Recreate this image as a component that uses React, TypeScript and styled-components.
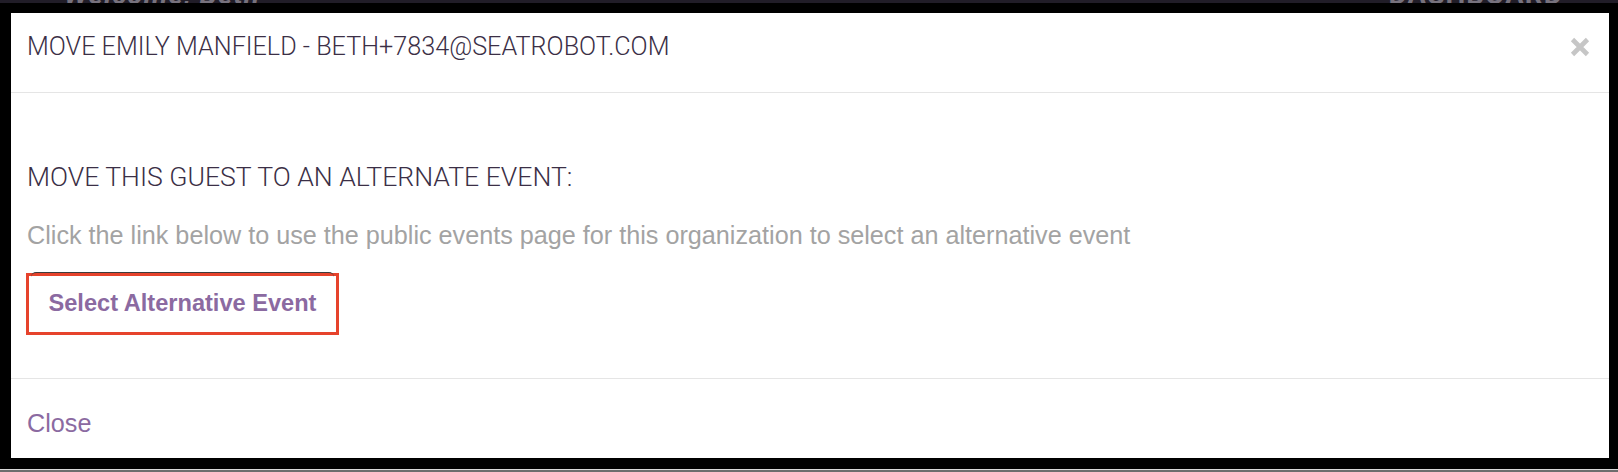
import React from "react";
import styled, { createGlobalStyle } from "styled-components";

const GlobalStyle = createGlobalStyle`
  html, body {
    margin: 0;
    padding: 0;
    background: #000;
  }
  * {
    box-sizing: border-box;
  }
`;

const Screen = styled.div`
  width: 1618px;
  height: 472px;
  display: flex;
  flex-direction: column;
  overflow: hidden;
  background: #1f1b25;
`;

const TopStrip = styled.div`
  height: 3px;
  overflow: hidden;
  display: flex;
  align-items: flex-end;
  justify-content: space-between;
  padding: 0 55px 0 64px;
  background: #211d28;
`;

const FadedText = styled.span<{ $italic?: boolean }>`
  font-family: "Roboto", "Liberation Sans", sans-serif;
  font-size: 28px;
  line-height: 28px;
  font-weight: 700;
  font-style: ${(p) => (p.$italic ? "italic" : "normal")};
  color: #77727d;
  margin-bottom: -6px;
  letter-spacing: 1px;
`;

const Frame = styled.div`
  flex: 1;
  background: #000;
  padding: 10px 9px 11px 11px;
  display: flex;
`;

const BottomStrip = styled.div`
  height: 3px;
  background: linear-gradient(#d8d8d8 0 1px, #6d6d6d 1px);
`;

const Modal = styled.div`
  flex: 1;
  background: #fff;
  display: flex;
  flex-direction: column;
`;

const Header = styled.div`
  height: 80px;
  flex: none;
  display: flex;
  align-items: flex-start;
  justify-content: space-between;
  padding: 19px 19px 0 16px;
  border-bottom: 1px solid #e5e5e5;
`;

const Title = styled.h4`
  margin: 0;
  font-family: "Roboto", "Liberation Sans", sans-serif;
  font-weight: 300;
  font-size: 25.2px;
  line-height: 30px;
  color: #3b2f46;
`;

const CloseIcon = styled.button`
  border: 0;
  padding: 0;
  margin-top: 5px;
  background: transparent;
  width: 20px;
  height: 20px;
  cursor: pointer;
  display: flex;
`;

const Body = styled.div`
  height: 286px;
  flex: none;
  padding: 69px 16px 0 16px;
  border-bottom: 1px solid #e5e5e5;
`;

const SectionTitle = styled.p`
  margin: 0;
  font-family: "Roboto", "Liberation Sans", sans-serif;
  font-weight: 300;
  font-size: 26.6px;
  line-height: 30px;
  color: #3b2f46;
`;

const Hint = styled.p`
  margin: 28px 0 0 0;
  font-family: "Liberation Sans", Arial, sans-serif;
  font-size: 25.2px;
  line-height: 30px;
  color: #a3a3a3;
`;

const Annotation = styled.div`
  margin: 23px 0 0 -1px;
  width: 313px;
  height: 62px;
  border: 3px solid #e6432c;
`;

const LinkButton = styled.button`
  display: block;
  margin: -4px 0 0 2px;
  width: 303px;
  height: 58px;
  border: 0;
  border-top: 1px solid #3c3c3c;
  border-radius: 5px;
  background: transparent;
  font-family: "Liberation Sans", Arial, sans-serif;
  font-weight: 700;
  font-size: 23.6px;
  color: #8b6aa1;
  cursor: pointer;
  padding: 4px 0 0 0;
`;

const Footer = styled.div`
  flex: 1;
  display: flex;
  align-items: center;
  padding: 10px 16px 0 16px;
`;

const FooterLink = styled.a`
  font-family: "Liberation Sans", Arial, sans-serif;
  font-size: 25.2px;
  color: #8b6aa1;
  text-decoration: none;
  cursor: pointer;
`;

export default function App() {
  return (
    <>
      <GlobalStyle />
      <Screen>
        <TopStrip>
          <FadedText $italic>Welcome, Beth</FadedText>
          <FadedText>DASHBOARD</FadedText>
        </TopStrip>
        <Frame>
          <Modal>
            <Header>
              <Title>MOVE EMILY MANFIELD - BETH+7834@SEATROBOT.COM</Title>
              <CloseIcon aria-label="close">
                <svg width="20" height="20" viewBox="0 0 20 20">
                  <path d="M2.5 2.5 L17.5 17.5 M17.5 2.5 L2.5 17.5" stroke="#c6c6c6" strokeWidth="4.6" />
                </svg>
              </CloseIcon>
            </Header>
            <Body>
              <SectionTitle>MOVE THIS GUEST TO AN ALTERNATE EVENT:</SectionTitle>
              <Hint>
                Click the link below to use the public events page for this organization to select an alternative event
              </Hint>
              <Annotation>
                <LinkButton>Select Alternative Event</LinkButton>
              </Annotation>
            </Body>
            <Footer>
              <FooterLink>Close</FooterLink>
            </Footer>
          </Modal>
        </Frame>
        <BottomStrip />
      </Screen>
    </>
  );
}
